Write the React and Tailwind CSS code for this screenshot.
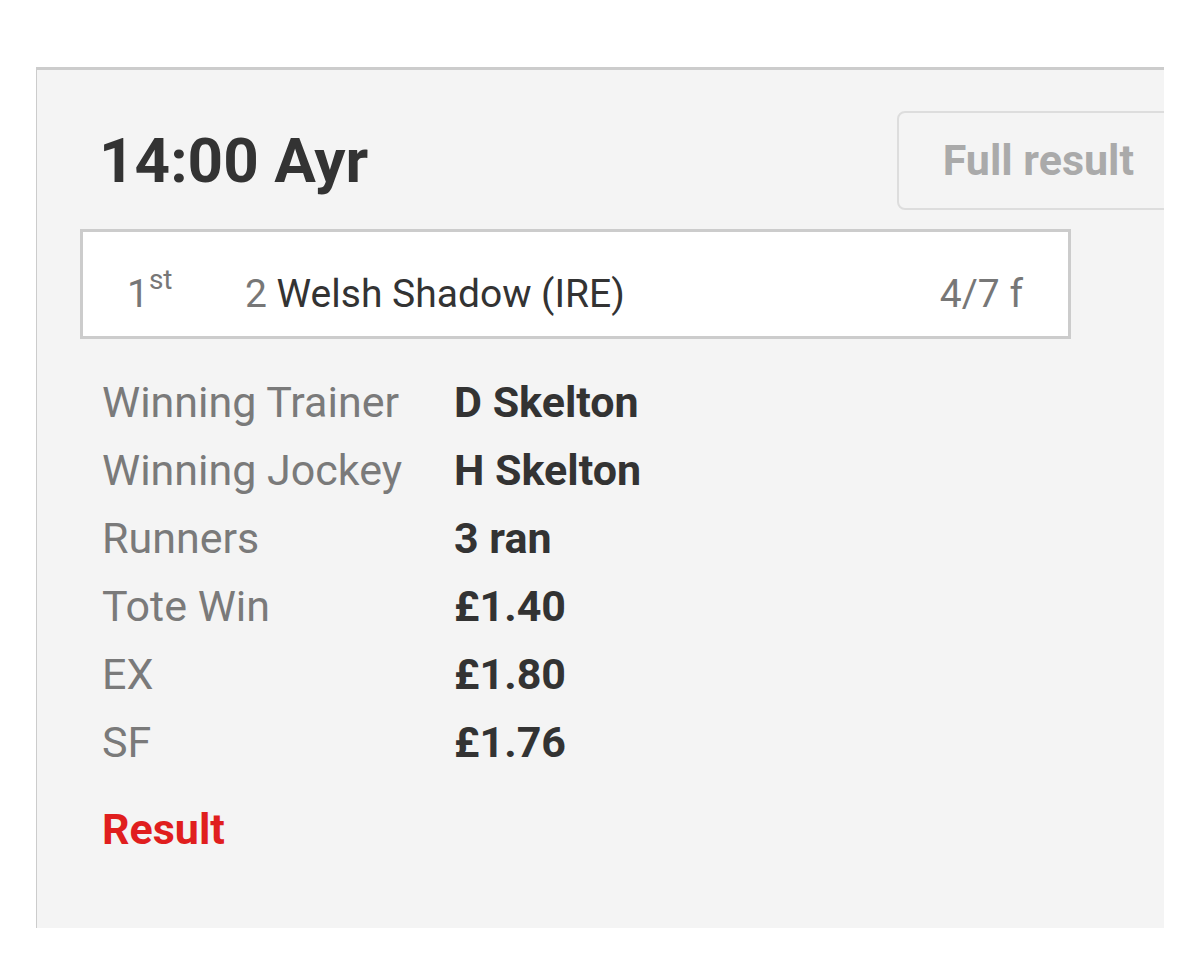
const DETAILS = [
  ["Winning Trainer", "D Skelton"],
  ["Winning Jockey", "H Skelton"],
  ["Runners", "3 ran"],
  ["Tote Win", "£1.40"],
  ["EX", "£1.80"],
  ["SF", "£1.76"],
];

export default function App() {
  return (
    <div className="w-[1200px] h-[965px] bg-white pt-[67px] pl-[36px] font-['Roboto',sans-serif]">
      <div className="w-[1128px] h-[861px] bg-[#f4f4f4] border-t-[3px] border-l border-[#cccccc] overflow-hidden">
        <div className="pl-[43px] pt-[41px]">
          {/* header */}
          <div className="flex items-center">
            <h1 className="ml-[19px] text-[62px] leading-none font-bold text-[#333333]">14:00 Ayr</h1>
            <button className="ml-auto mr-[-16px] h-[99px] px-[44px] rounded-[8px] border-2 border-[#dddddd] text-[43px] font-bold text-[#aaaaaa] whitespace-nowrap">
              Full result
            </button>
          </div>

          {/* winner */}
          <div className="mt-[19px] w-[991px] h-[110px] bg-white border-[3px] border-[#cccccc] flex items-center pt-[20px] pl-[44px] pr-[45px] text-[39px] leading-none text-[#777777]">
            <span className="w-[118px]">
              1<span className="text-[28px] relative top-[-18px]">st</span>
            </span>
            <span>
              2 <span className="text-[#333333]">Welsh Shadow (IRE)</span>
            </span>
            <span className="ml-auto">4/7 f</span>
          </div>

          {/* details */}
          <div className="mt-[29px] ml-[22px] grid grid-cols-[352px_1fr] text-[43px] leading-[68px]">
            {DETAILS.map(([label, value]) => (
              <div key={label} className="contents">
                <div className="text-[#7a7a7a]">{label}</div>
                <div className="font-bold text-[#333333]">{value}</div>
              </div>
            ))}
          </div>

          <div className="mt-[19px] ml-[22px] text-[43px] leading-[68px] font-bold text-[#e01e1e]">Result</div>
        </div>
      </div>
    </div>
  );
}
